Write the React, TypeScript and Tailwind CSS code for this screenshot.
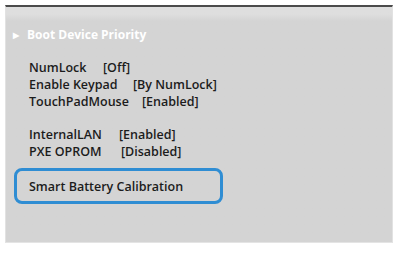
const rows1 = [
    { label: "NumLock", value: "[Off]", w: "w-[74px]" },
    { label: "Enable Keypad", value: "[By NumLock]", w: "w-[104px]" },
    { label: "TouchPadMouse", value: "[Enabled]", w: "w-[113px]" },
];

const rows2 = [
    { label: "InternalLAN", value: "[Enabled]", w: "w-[90px]" },
    { label: "PXE OPROM", value: "[Disabled]", w: "w-[92px]" },
];

function Row({ label, value, w }: { label: string; value: string; w: string }) {
    return (
        <div className="flex h-[17px] items-center">
            <span className={`${w} shrink-0`}>{label}</span>
            <span>{value}</span>
        </div>
    );
}

export default function App() {
    return (
        <div
            className="w-[396px] h-[253px] bg-white pt-[5px] pl-[5px]"
            style={{ fontFamily: '"Open Sans", "Liberation Sans", sans-serif' }}
        >
            <div className="w-[388px] h-[238px] bg-gradient-to-b from-[#dedede] from-[3%] to-[#d4d4d4] to-[6%] border-t-2 border-[#4b4b4b] border-x border-x-[#e2e2e2] border-b border-b-[#e4e4e4] text-[12.5px] font-semibold text-[#1c1c1c]">
                <div className="pt-[19px] pl-[7px] flex items-center text-white font-bold text-[12px] h-[17px] box-content">
                    <span className="text-[8px] mr-[8px]">▶</span>
                    <span>Boot Device Priority</span>
                </div>
                <div className="pl-[23px] mt-[17px]">
                    {rows1.map((r) => (
                        <Row key={r.label} {...r} />
                    ))}
                </div>
                <div className="pl-[23px] mt-[16px]">
                    {rows2.map((r) => (
                        <Row key={r.label} {...r} />
                    ))}
                </div>
                <div className="ml-[8px] mt-[7px] w-[209px] h-[36px] border-[3px] border-[#2f8dd3] rounded-[8px] flex items-center pl-[12px] pt-[2px]">
                    Smart Battery Calibration
                </div>
            </div>
        </div>
    );
}
